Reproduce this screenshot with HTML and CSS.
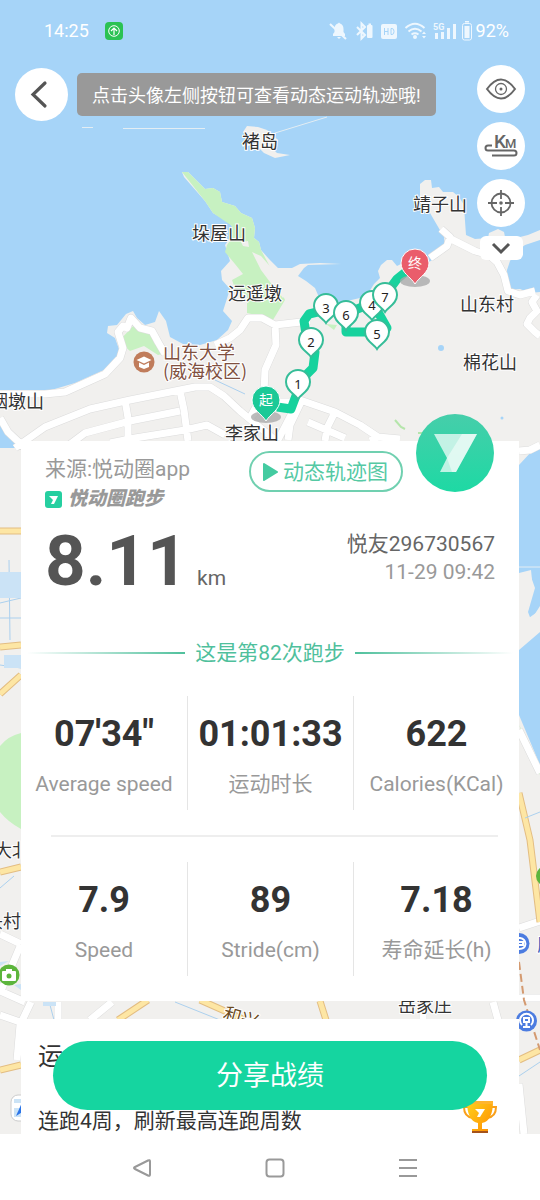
FILE: index.html
```html
<!DOCTYPE html>
<html lang="zh-CN">
<head>
    <meta charset="UTF-8">
    <meta name="viewport" content="width=device-width, initial-scale=1.0">
    <title>悦动圈跑步</title>
    <link rel="stylesheet" href="styles.css">
</head>
<body>
    <div class="screen">
        <!-- map -->
        <svg class="map" viewBox="0 0 540 1134" preserveAspectRatio="xMidYMin slice">
            <defs>
                <path id="numPin" d="M0 15C-3 10-12 7-12-2A12 12 0 0 1 12-2C12 7 3 10 0 15Z"/>
                <path id="bigPin" d="M0 20C-4 13-14 9-14-1A14 14 0 0 1 14-1C14 9 4 13 0 20Z"/>
            </defs>
            <rect class="land" width="540" height="1134"/>

            <!-- sea and coast -->
            <path class="water" d="M0 0H540V230L528 235 520 237 511 242 505 237 504 232 498 229 489 233 488 238 475 239 466 235 465 221 464 205 459 197 453 192 443 192 439 187 432 188 431 180 425 180 420 184 420 196 423 203 430 213 437 225 444 237 445 247 438 257 427 263 405 262 397 266 392 260 387 260 381 265 378 271 380 278 374 284 369 292 360 298 347 301 332 304 321 302 315 288 306 281 298 276 304 268 308 265 341 264 320 263 300 264 292 268 278 268 269 259 261 250 259 242 254 238 255 228 252 218 241 213 235 206 222 202 220 192 213 188 205 189 188 172 182 172 184 177 205 201 213 213 227 221 232 226 230 238 225 245 230 261 221 271 222 280 230 289 223 311 232 321 228 330 217 340 200 345 183 344 170 337 166 321 159 311 155 322 145 325 137 318 133 311 126 314 117 325 108 326 107 333 115 338 120 352 116 361 104 370 75 383 48 391 0 393Z"/>
            <path class="land" d="M243 132 247 126 258 127 267 130 278 140 270 146 277 153 290 155 275 158 264 153Z"/>
            <path class="water" d="M540 240 525 245 517 251 510 261 507 270 508 290 520 289 530 293 540 292ZM0 423 15 440 25 448 0 448ZM540 445 532 451 519 465V575L530 574 535 588 528 612 531 620 540 606ZM540 632 519 650V715L540 765Z"/>
            <path class="land" d="M519 573 531 570 533 590 528 610 519 615ZM519 625 540 610V618L519 635Z"/>
            <path class="shoal" d="M82 127.500h11M123 128.500h82M275 133l52-16M519 567h21"/>

            <!-- parks -->
            <path class="park" d="M182 172 188 172 205 189 213 188 220 192 222 202 235 206 241 213 252 218 255 228 254 238 259 242 261 250 268 263 285 300 276 315 271 323 265 317 247 313V295L236 291 232 280 243 274 235 264 225 252 227 245 232 238 232 226 213 213 205 201ZM120 340 134 325 152 333 162 354 158 355 144 346 130 351 121 343ZM21 733Q8 736 0 746V812Q8 822 21 829ZM326 324 337 325 334 330ZM519 725 526 737 540 765V775Z"/>
            <path class="land" d="M241 242 248 241 249 247 243 246ZM252 252 261 256 275 272 290 290 283 298 270 282 261 270Z"/>

            <!-- small roads -->
            <g class="roadEdge">
                <path id="roads" d="M0 394H45L65 392 105 374 120 358 123 348 118 332 123 326 127 328 131 318 140 328 152 331 158 342 165 354M15 448 45 427 90 409 130 400 195 387H210L224 396 240 411 257 425 275 440M0 418 8 432 24 447M125 400 128 418V441M65 448 85 433 130 421 180 411M110 443 135 438 185 430 207 425 225 435M180 391 184 410 188 441M215 345 230 338 240 330 248 318 262 318 275 325 310 321M275 324 276 345 265 370 264 392 251 416M251 416 267 402 290 402 300 400 335 412 360 425 378 437 400 439M302 400 290 425 288 440M293 411 278 440M335 412 327 428 325 441M308 422 345 438M378 437 370 441M430 258 447 246 450 237 441 229M447 237 475 251 489 255 497 262 504 275 508 291 520 295 535 291M537 295 532 302 537 311 530 318 527 324 535 332 540 336M519 451 530 450 540 445M519 730 540 773M519 928 540 921M519 998H540M0 934 21 944M21 944 10 970 0 993M0 991 25 1002M58 1002V1020M31 1002 20 1025 17 1060M0 1015 20 1022M112 1002 90 1020M493 1002 498 1020M519 1084 524 1134M423 1011V1020"/>
            </g>
            <use class="roadFill" href="#roads"/>

            <!-- main roads -->
            <g class="mainEdge">
                <path id="mainRoads" d="M0 531H21M0 647 21 645M0 694 21 675M0 872 21 867M0 1070 21 1065M519 793 530 840 540 922M118 1020 148 1000M200 1000 245 1020M320 1001 326 1020M519 1060 540 1050"/>
            </g>
            <use class="mainFill" href="#mainRoads"/>
            <path class="stream" d="M215 380 245 394M0 603 21 598M0 618H21M0 665 21 668M0 888 14 876M9 560 10 640M519 1076 540 1062M50 1005 54 1020M175 1002 220 1020M525 818 540 812"/>
            <path class="pond" d="M0 572H21V598H0ZM4 655H21V668H4ZM43 1002H56V1006H43ZM0 962 9 961 0 966ZM14 985 21 984V990Z"/>
            <circle class="water" cx="441" cy="348" r="3"/>
            <circle class="water" cx="502" cy="418" r="1.500"/>
            <path class="grass" d="M395 420 401 427 405 429M418 433h6"/>
            <path class="rail" d="M519 962 524 1000 540 1050"/>

            <!-- place names -->
            <g class="place">
                <text x="242" y="148">褚岛</text>
                <text x="413" y="211">靖子山</text>
                <text x="192" y="240">垛屋山</text>
                <text x="228" y="300">远遥墩</text>
                <text x="460" y="311">山东村</text>
                <text x="463" y="369">棉花山</text>
                <text x="-10" y="408">烟墩山</text>
                <text x="225" y="440">李家山</text>
                <text x="-6" y="857">大北</text>
                <text x="-15" y="928">头村</text>
                <text x="398" y="1012">岳家庄</text>
                <text x="222" y="1019" class="street" transform="rotate(16 222 1019)">和兴</text>
                <text x="537" y="951" class="metro">府</text>
            </g>
            <g class="school">
                <text x="163" y="359">山东大学</text>
                <text x="163" y="378">(威海校区)</text>
                <circle cx="144" cy="362" r="10.500"/>
                <path d="M144 356.500 136.500 360 144 363.500 151.500 360ZM139 362.500V367L144 369 149 367V362.500L144 365Z"/>
            </g>
            <g class="camera">
                <circle cx="9" cy="975" r="10.500"/>
                <rect x="2" y="971" width="14" height="10" rx="1"/>
                <rect x="6" y="969" width="6" height="4"/>
                <circle cx="9" cy="976" r="2.500"/>
                <circle cx="546" cy="876" r="10"/>
            </g>
            <g class="station">
                <circle cx="519" cy="943.500" r="10.500"/>
                <path d="M513 942A6.500 6.500 0 0 1 525.500 944Q525 949 519 949M518 942h5v3h-5"/>
                <circle cx="526.500" cy="1021" r="10.500"/>
                <path d="M522 1025A6.500 6.500 0 1 1 531 1025M524 1018h5v4h-5ZM526.500 1022v4M523 1027h7"/>
            </g>
            <rect class="gps" x="11" y="1095" width="26" height="26" rx="7"/>
            <path class="pond" d="M14 1099H21V1103H14ZM14 1108H21V1117H14Z"/>
            <path class="arrow" d="M16 1116 24 1098V1111Z"/>

            <!-- running track -->
            <path class="track" d="M277 407 291 409 297 393 304 377 313 368 315 352 306 334 304 321 309 314 326 310M346 317V332H375L387 328 378 312M350 312 372 303 386 294 397 279 407 271"/>
            <ellipse class="shade" cx="266" cy="417" rx="15" ry="6"/>
            <ellipse class="shade" cx="415" cy="281" rx="15" ry="6"/>
            <use class="start" href="#bigPin" x="266" y="401"/>
            <use class="end" href="#bigPin" x="415" y="264"/>
            <g class="pinText">
                <text x="266" y="405">起</text>
                <text x="415" y="268">终</text>
            </g>
            <g class="num">
                <use href="#numPin" x="298" y="384"/><text x="298" y="389">1</text>
                <use href="#numPin" x="311" y="342"/><text x="311" y="347">2</text>
                <use href="#numPin" x="326" y="308"/><text x="326" y="313">3</text>
                <use href="#numPin" x="372" y="305"/><text x="372" y="310">4</text>
                <use href="#numPin" x="377" y="334"/><text x="377" y="339">5</text>
                <use href="#numPin" x="346" y="315"/><text x="346" y="320">6</text>
                <use href="#numPin" x="385" y="297"/><text x="385" y="302">7</text>
            </g>
        </svg>

        <div class="statusBar">
            <span>14:25</span>
            <svg class="appDot" width="18" height="18" viewBox="0 0 18 18">
                <rect width="18" height="18" rx="4" fill="#2bc253"/>
                <path d="M9 13V6M6 9 9 6 12 9" fill="none" stroke="#fff" stroke-width="1.200"/>
                <circle cx="9" cy="9" r="5.300" fill="none" stroke="#fff"/>
            </svg>
            <svg class="statusIcons" width="148" height="22" viewBox="326 20 148 22">
                <path d="M331 36V34L332.500 32V28Q333 24 336 23.500L337 22.500 338 23.500Q341.500 24.500 341.500 29V32L343 34V36ZM335 37H339L337 39Z"/>
                <path class="slash" d="M328 24 344 39"/>
                <path class="line" d="M355 27 363 35 359.500 38.500V23.500L363 27 355 35"/>
                <rect x="365" y="25" width="5.500" height="13" rx="1"/>
                <rect x="366.500" y="23.500" width="2.500" height="2"/>
                <rect x="379" y="24" width="16" height="15" rx="2"/>
                <path class="hd" d="M382.500 28V35M386 28V35M382.500 31.500H386M389 28.500V34.500H390Q392 34.500 392 31.500T390 28.500Z"/>
                <path class="line" d="M403.500 28Q413 19.500 422.500 28M406.500 31.500Q413 26 419.500 31.500M409.500 34.500Q413 32 416.500 34.500"/>
                <circle cx="413" cy="37" r="2"/>
                <path d="M420 34 422 31.500 424 34ZM420 36 422 38.500 424 36Z"/>
                <text x="431" y="30">5G</text>
                <path d="M433 33h3v6h-3ZM439 32h3v7h-3ZM445 28h3v11h-3ZM451 24h3v15h-3Z"/>
                <rect class="cell" x="460.500" y="23.500" width="9" height="16.500" rx="2"/>
                <path d="M463 21h4v1.500h-4ZM462.500 26h5v12h-5Z"/>
            </svg>
            <span>92%</span>
        </div>

        <div class="topRow">
            <button class="back" aria-label="返回">
                <svg width="53" height="53" viewBox="0 0 53 53"><path d="M30 15 18 26.500 30 38" fill="none" stroke="#555" stroke-width="3.200" stroke-linecap="round"/></svg>
            </button>
            <div class="hint">点击头像左侧按钮可查看动态运动轨迹哦!</div>
            <div class="tools">
                <button class="tool" aria-label="隐藏地图">
                    <svg width="48" height="48" viewBox="0 0 48 48">
                        <path d="M10 24Q24 5 38 24Q24 43 10 24Z" stroke-width="2"/>
                        <circle cx="24" cy="24" r="5.500" stroke-width="1.300"/><circle class="dot" cx="24" cy="24" r="1.500"/>
                    </svg>
                </button>
                <button class="tool" aria-label="公里标记">
                    <svg width="48" height="48" viewBox="0 0 48 48">
                        <text x="17" y="26" font-size="19">K</text><text x="28" y="26" font-size="13">M</text>
                        <path d="M15 23.500H11Q8.500 23.500 8.500 26T11 28.500H37Q39.500 28.500 39.500 31T37 33.500H15" stroke-width="2"/>
                    </svg>
                </button>
                <button class="tool" aria-label="定位">
                    <svg width="48" height="48" viewBox="0 0 48 48">
                        <circle cx="24" cy="24" r="9.500" stroke-width="1.800"/><circle class="dot" cx="24" cy="24" r="1.800"/>
                        <path d="M24 11V20M24 28V37M11 24H20M28 24H37" stroke-width="1.800"/>
                    </svg>
                </button>
                <button class="more" aria-label="更多">
                    <svg width="20" height="14" viewBox="0 0 20 14"><path d="M2 3 10 11 18 3" fill="none" stroke="#555" stroke-width="3"/></svg>
                </button>
            </div>
        </div>

        <section class="card">
            <a class="avatar" href="#" aria-label="头像">
                <svg width="78" height="78" viewBox="0 0 78 78">
                    <defs><linearGradient id="av" x1="0" y1="0" x2="0" y2="1"><stop offset="0" stop-color="#46ceaa"/><stop offset="1" stop-color="#1ed9a4"/></linearGradient></defs>
                    <circle cx="39" cy="39" r="39" fill="url(#av)"/>
                    <path d="M18 20H61L40 58H24L31 44Z" fill="#fff" fill-opacity=".7"/>
                    <path d="M46 20H61L40 58H36L31 44Z" fill="#fff" fill-opacity=".5"/>
                </svg>
            </a>
            <div class="cardHead">
                <div>
                    <p class="source">来源:悦动圈app</p>
                    <p class="brand">
                        <svg width="17" height="17" viewBox="0 0 17 17"><rect width="17" height="17" rx="3" fill="#26cfa0"/><path d="M4 5H13L9 13H6L8 9Z" fill="#fff"/></svg>
                        <span>悦动圈跑步</span>
                    </p>
                </div>
                <button class="play">
                    <svg width="15" height="20" viewBox="0 0 15 20"><path d="M1 2 14 10 1 18Z" fill="#44cba1" stroke="#44cba1" stroke-width="2" stroke-linejoin="round"/></svg>
                    动态轨迹图
                </button>
            </div>
            <div class="summary">
                <p class="distance"><strong>8.11</strong> <span>km</span></p>
                <div class="user">
                    <p class="name">悦友296730567</p>
                    <p class="date">11-29 09:42</p>
                </div>
            </div>
            <h2 class="times">这是第82次跑步</h2>
            <dl class="stats">
                <div><dd>07'34"</dd><dt>Average speed</dt></div>
                <div><dd>01:01:33</dd><dt>运动时长</dt></div>
                <div><dd>622</dd><dt>Calories(KCal)</dt></div>
            </dl>
            <hr>
            <dl class="stats">
                <div><dd>7.9</dd><dt>Speed</dt></div>
                <div><dd>89</dd><dt>Stride(cm)</dt></div>
                <div><dd>7.18</dd><dt>寿命延长(h)</dt></div>
            </dl>
        </section>

        <section class="card honor">
            <h3>运</h3>
            <div class="honorRow">
                <p>连跑4周，刷新最高连跑周数</p>
                <svg width="36" height="34" viewBox="0 0 36 34">
                    <defs><linearGradient id="cup" x1="0" y1="0" x2="1" y2="1"><stop offset="0" stop-color="#ffd21c"/><stop offset="1" stop-color="#ff8c00"/></linearGradient></defs>
                    <path d="M7 8H2Q2 18 11 19M29 8H34Q34 18 25 19" fill="none" stroke="#f9a01b" stroke-width="2"/>
                    <path d="M5 2H31Q31 22 20 24V30H26V34H10V30H16V24Q5 22 5 2Z" fill="url(#cup)"/>
                    <path d="M5 2H31V5H5Z" fill="#ffb52e"/>
                    <path d="M13 10H23L18 18H15L17 14Z" fill="#fff"/>
                    <path d="M10 32H26V34H10Z" fill="#a5521a"/>
                </svg>
            </div>
        </section>

        <button class="share">分享战绩</button>
    </div>

    <nav class="navBar">
        <button aria-label="后退"><svg width="20" height="20" viewBox="0 0 20 20"><path d="M16 2.500Q18 1.500 18 3.500V16.500Q18 18.500 16 17.500L3 11Q1 10 3 9Z"/></svg></button>
        <button aria-label="主页"><svg width="20" height="20" viewBox="0 0 20 20"><rect x="1.500" y="1.500" width="17" height="17" rx="3"/></svg></button>
        <button aria-label="最近任务"><svg width="20" height="20" viewBox="0 0 20 20"><path d="M1 2H19M1 10H19M1 18H19"/></svg></button>
    </nav>
</body>
</html>
```
FILE: styles.css
```css
* {
    box-sizing: border-box;
    margin: 0;
    padding: 0;
}
body {
    display: flex;
    flex-direction: column;
    min-height: 100vh;
    background-color: white;
    color: #333;
    font-family: Roboto, "Noto Sans CJK SC", sans-serif;
    font-size: 21px;
    line-height: 28px;
}
button {
    border: none;
    background: none;
    font: inherit;
    color: inherit;
    cursor: pointer;
}
.screen {
    position: relative;
    flex: 1;
    display: flex;
    flex-direction: column;
    overflow: hidden;
}

/* map */
.map {
    position: absolute;
    top: 0;
    left: 0;
    width: 100%;
    height: 100%;
}
.land {
    fill: #f1f0ee;
}
.water {
    fill: #a6d4f8;
}
.park {
    fill: #c7f1c1;
}
.pond {
    fill: #cbe3f6;
}
.shoal {
    fill: none;
    stroke: #e3edf3;
    stroke-width: 1;
}
.roadEdge {
    fill: none;
    stroke: #dcdcdc;
    stroke-width: 8;
    stroke-linejoin: round;
}
.roadFill {
    fill: none;
    stroke: white;
    stroke-width: 7;
    stroke-linejoin: round;
}
.mainEdge {
    fill: none;
    stroke: #e3bd82;
    stroke-width: 7;
}
.mainFill {
    fill: none;
    stroke: #fde6a4;
    stroke-width: 5;
}
.stream {
    fill: none;
    stroke: #abd0ee;
    stroke-width: 1;
}
.grass {
    fill: none;
    stroke: #b5e5ab;
    stroke-width: 2;
}
.rail {
    fill: none;
    stroke: #d49a70;
    stroke-width: 2;
    stroke-dasharray: 8 4;
}
.place text, .school text {
    font-family: "Noto Sans CJK SC", sans-serif;
    font-size: 18px;
    fill: #333;
    stroke: white;
    stroke-width: 2px;
    paint-order: stroke;
}
.place .street {
    fill: #6b4a1c;
}
.place .metro {
    fill: #3f62b8;
}
.school text {
    fill: #80503f;
}
.school circle {
    fill: #c07c5b;
}
.school path {
    fill: white;
}
.camera circle {
    fill: #5cb53c;
}
.camera rect {
    fill: white;
}
.station circle {
    fill: #4c7ce0;
}
.station path {
    fill: none;
    stroke: white;
    stroke-width: 2;
}
.gps {
    fill: white;
    stroke: #ccc;
}
.arrow {
    fill: #2a74e8;
}
.track {
    fill: none;
    stroke: #17d29d;
    stroke-width: 9;
    stroke-linejoin: round;
}
.shade {
    fill: #aaa;
    opacity: 0.8;
}
.start, .end {
    fill: #1bc997;
    stroke: white;
    stroke-width: 1;
}
.end {
    fill: #ea5d6b;
}
.pinText text {
    fill: white;
    font-size: 14px;
    text-anchor: middle;
}
.num use {
    fill: white;
    stroke: #36bd98;
    stroke-width: 2;
}
.num text {
    fill: #222;
    font-family: "Noto Sans", sans-serif;
    font-size: 13px;
    text-anchor: middle;
}

/* status bar and map buttons */
.statusBar {
    position: relative;
    display: flex;
    align-items: center;
    height: 62px;
    padding: 0 31px 0 44px;
    color: white;
    font-size: 18px;
}
.appDot {
    margin-left: 16px;
}
.statusIcons {
    margin-left: auto;
    fill: #eef7fe;
}
.statusIcons .line, .statusIcons .cell {
    fill: none;
    stroke: #eef7fe;
    stroke-width: 2;
}
.statusIcons .cell {
    stroke-width: 1;
}
.statusIcons .slash {
    stroke: #eef7fe;
    stroke-width: 2;
}
.statusIcons .hd {
    fill: none;
    stroke: #a6d4f8;
    stroke-width: 1;
}
.statusIcons text {
    font-size: 9px;
    font-weight: bold;
}
.topRow {
    position: relative;
    display: flex;
    align-items: flex-start;
    height: 379px;
    padding: 3px 15px 0;
}
.back {
    width: 53px;
    height: 53px;
    margin-top: 3px;
    border-radius: 50%;
    background-color: white;
}
.back svg, .tool svg, .avatar svg {
    display: block;
}
.hint {
    margin: 8px 0 0 9px;
    padding: 9px 15px 6px;
    border-radius: 5px;
    background-color: #999;
    color: white;
    font-size: 18px;
    white-space: nowrap;
}
.tools {
    display: flex;
    flex-direction: column;
    align-items: center;
    gap: 9px;
    margin-left: auto;
}
.tool {
    width: 48px;
    height: 48px;
    border-radius: 50%;
    background-color: white;
}
.tool svg {
    fill: none;
    stroke: #666;
}
.tool .dot, .tool text {
    fill: #666;
    stroke: none;
    font-weight: 500;
}
.more {
    display: flex;
    align-items: center;
    justify-content: center;
    width: 43px;
    height: 24px;
    border-radius: 6px;
    background-color: white;
}

/* result card */
.card {
    position: relative;
    margin: 0 21px;
    background-color: white;
}
.avatar {
    position: absolute;
    top: -27px;
    right: 25px;
}
.cardHead {
    display: flex;
    align-items: flex-start;
    justify-content: space-between;
    padding: 10px 116px 0 24px;
}
.source {
    margin-top: 4px;
    color: #999;
}
.brand {
    display: flex;
    align-items: center;
    gap: 6px;
    height: 32px;
    color: #999;
    font-size: 19px;
    font-style: italic;
    font-weight: 900;
}
.play {
    display: flex;
    align-items: center;
    gap: 5px;
    height: 41px;
    padding: 0 13px 0 12px;
    border: 2px solid #70d0b0;
    border-radius: 21px;
    color: #55c9a4;
}
.summary {
    display: flex;
    justify-content: space-between;
    padding: 14px 24px 0;
}
.distance {
    color: #666;
    line-height: 64px;
}
.distance strong {
    color: #555;
    font-size: 71px;
}
.distance span {
    margin-left: 4px;
}
.user {
    padding-top: 1px;
    color: #666;
    text-align: right;
}
.date {
    color: #999;
}
.times {
    display: flex;
    align-items: center;
    gap: 10px;
    margin: 29px 6px 0;
    color: #4fc09c;
    font-size: 21px;
    font-weight: normal;
}
.times::before, .times::after {
    content: "";
    flex: 1;
    height: 2px;
    background: linear-gradient(to right, white, #4fc09c);
}
.times::after {
    background: linear-gradient(to left, white, #4fc09c);
}
.stats {
    display: grid;
    grid-template-columns: repeat(3, 1fr);
    margin: 25px 0;
}
.times + .stats {
    margin-top: 29px;
}
.stats div {
    height: 114px;
    padding-top: 16px;
    text-align: center;
    white-space: nowrap;
}
.stats div + div {
    border-left: 1px solid #e5e5e5;
}
.stats dd {
    font-size: 36px;
    font-weight: bold;
    line-height: 44px;
}
.stats dt {
    margin-top: 14px;
    color: #999;
}
hr {
    height: 2px;
    margin: 0 21px 0 30px;
    border: none;
    background-color: #eee;
}

/* second card, cut by the navigation bar */
.honor {
    flex: 1;
    margin-top: 18px;
    padding: 20px 21px 0 17px;
}
.honor h3 {
    font-size: 25px;
    font-weight: normal;
    line-height: 36px;
}
.honorRow {
    display: flex;
    justify-content: space-between;
    margin-top: 24px;
}
.honorRow p {
    margin-top: 8px;
    margin-bottom: -2px;
}
.share {
    position: absolute;
    left: 53px;
    right: 53px;
    bottom: 24px;
    height: 69px;
    border-radius: 35px;
    background-color: #15d5a0;
    color: white;
    font-size: 27px;
}
.navBar {
    display: grid;
    grid-template-columns: repeat(3, 1fr);
    height: 66px;
    padding: 0 66px 0 75px;
    background-color: white;
}
.navBar svg {
    fill: none;
    stroke: #999;
    stroke-width: 2;
    vertical-align: middle;
}
```
